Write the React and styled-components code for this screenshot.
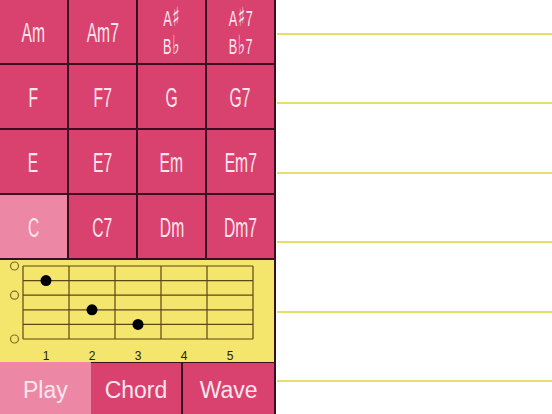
import React from "react";
import styled, { createGlobalStyle } from "styled-components";

const Global = createGlobalStyle`
  html, body { margin: 0; padding: 0; background: #ffffff; }
  body { font-family: "Liberation Sans", Arial, sans-serif; }
  #root { width: 552px; height: 414px; overflow: hidden; }
`;

const PINK = "#d9416f";
const PINK_ACTIVE = "#ec88a6";
const DARK = "#3a0f1f";
const YELLOW = "#f4e56c";
const LABEL = "#fce6ee";

const Screen = styled.div`
  display: flex;
  width: 552px;
  height: 414px;
  background: #fff;
`;

const LeftPanel = styled.div`
  width: 276px;
  flex: none;
  display: flex;
  flex-direction: column;
`;

const ChordGrid = styled.div`
  display: grid;
  grid-template-columns: repeat(4, 1fr);
  grid-template-rows: repeat(4, 1fr);
  gap: 2px;
  height: 260px;
  box-sizing: border-box;
  border-right: 2px solid ${DARK};
  border-bottom: 2px solid ${DARK};
  background: ${DARK};
`;

const ChordCell = styled.div`
  background: ${(p) => (p.$active ? PINK_ACTIVE : PINK)};
  display: flex;
  flex-direction: column;
  align-items: center;
  justify-content: center;
  color: ${LABEL};
  overflow: hidden;
`;

const ChordLabel = styled.span`
  display: block;
  font-family: "Liberation Sans", "DejaVu Sans", sans-serif;
  font-size: ${(p) => (p.$small ? "22px" : "27px")};
  line-height: ${(p) => (p.$small ? "28px" : "30px")};
  height: ${(p) => (p.$small ? "28px" : "30px")};
  transform: scaleX(0.58);
  white-space: nowrap;
  margin-top: ${(p) => (p.$small ? "0" : "2px")};
`;

const Accidental = styled.span`
  font-family: "DejaVu Sans", sans-serif;
  font-size: 1.2em;
  line-height: 1;
  margin: 0 1px;
`;

const FretPanel = styled.div`
  height: 102px;
  background: ${YELLOW};
  border-right: 2px solid ${DARK};
  box-sizing: border-box;
`;

const ButtonBar = styled.div`
  display: flex;
  height: 52px;
  border-right: 2px solid ${DARK};
  box-sizing: border-box;
`;

const TabButton = styled.div`
  flex: 1;
  display: flex;
  align-items: center;
  justify-content: center;
  background: ${(p) => (p.$active ? PINK_ACTIVE : PINK)};
  border-top: ${(p) => (p.$active ? "none" : `1px solid ${DARK}`)};
  border-left: ${(p) => (p.$divider ? `2px solid ${DARK}` : "none")};
  color: ${LABEL};
  font-size: 23px;
  padding-top: 4px;
  box-sizing: border-box;
`;

const Staff = styled.div`
  flex: 1;
  display: flex;
  flex-direction: column;
  padding-top: 33px;
  padding-left: 1px;
`;

const StaffLine = styled.div`
  height: 69.4px;
  flex: none;
  box-sizing: border-box;
  border-top: 2px solid #e8df6a;
`;

const rows = [
  [["Am"], ["Am7"], ["A#", "Bb"], ["A#7", "Bb7"]],
  [["F"], ["F7"], ["G"], ["G7"]],
  [["E"], ["E7"], ["Em"], ["Em7"]],
  [["C"], ["C7"], ["Dm"], ["Dm7"]],
];

function renderLabel(t) {
  const root = t[0];
  const acc = t[1] === "#" ? "\u266F" : t[1] === "b" ? "\u266D" : null;
  if (!acc) return t;
  return (
    <>
      {root}
      <Accidental>{acc}</Accidental>
      {t.slice(2)}
    </>
  );
}

const strings = [6, 20.6, 35.2, 49.8, 64.4, 79];
const frets = [23, 69, 115, 161, 207, 253];

function FretDiagram() {
  const line = "#5a4812";
  return (
    <svg width="274" height="102" viewBox="0 0 274 102">
      {strings.map((y) => (
        <line key={"s" + y} x1="23" x2="253" y1={y} y2={y} stroke={line} strokeWidth="1.2" />
      ))}
      {frets.map((x) => (
        <line key={"f" + x} x1={x} x2={x} y1="6" y2="79" stroke={line} strokeWidth="1.2" />
      ))}
      {[6, 35.2, 79].map((y) => (
        <circle key={"o" + y} cx="14.5" cy={y} r="4" fill="none" stroke="#7d6e2a" strokeWidth="1.2" />
      ))}
      <circle cx="46" cy={20.6} r="5.5" fill="#000" />
      <circle cx="92" cy={49.8} r="5.5" fill="#000" />
      <circle cx="138" cy={64.4} r="5.5" fill="#000" />
      {[1, 2, 3, 4, 5].map((n, i) => (
        <text
          key={n}
          x={46 + i * 46}
          y="99.5"
          textAnchor="middle"
          fontSize="12"
          fontFamily="Liberation Sans, Arial, sans-serif"
          fill="#2a2208"
        >
          {n}
        </text>
      ))}
    </svg>
  );
}

export default function App() {
  return (
    <>
      <Global />
      <Screen>
        <LeftPanel>
          <ChordGrid>
            {rows.map((row, ri) =>
              row.map((lines, ci) => (
                <ChordCell key={ri + "-" + ci} $active={ri === 3 && ci === 0}>
                  {lines.map((t) => (
                    <ChordLabel key={t} $small={lines.length > 1}>
                      {renderLabel(t)}
                    </ChordLabel>
                  ))}
                </ChordCell>
              ))
            )}
          </ChordGrid>
          <FretPanel>
            <FretDiagram />
          </FretPanel>
          <ButtonBar>
            <TabButton $active>Play</TabButton>
            <TabButton>Chord</TabButton>
            <TabButton $divider>Wave</TabButton>
          </ButtonBar>
        </LeftPanel>
        <Staff>
          {[0, 1, 2, 3, 4, 5].map((i) => (
            <StaffLine key={i} />
          ))}
        </Staff>
      </Screen>
    </>
  );
}
